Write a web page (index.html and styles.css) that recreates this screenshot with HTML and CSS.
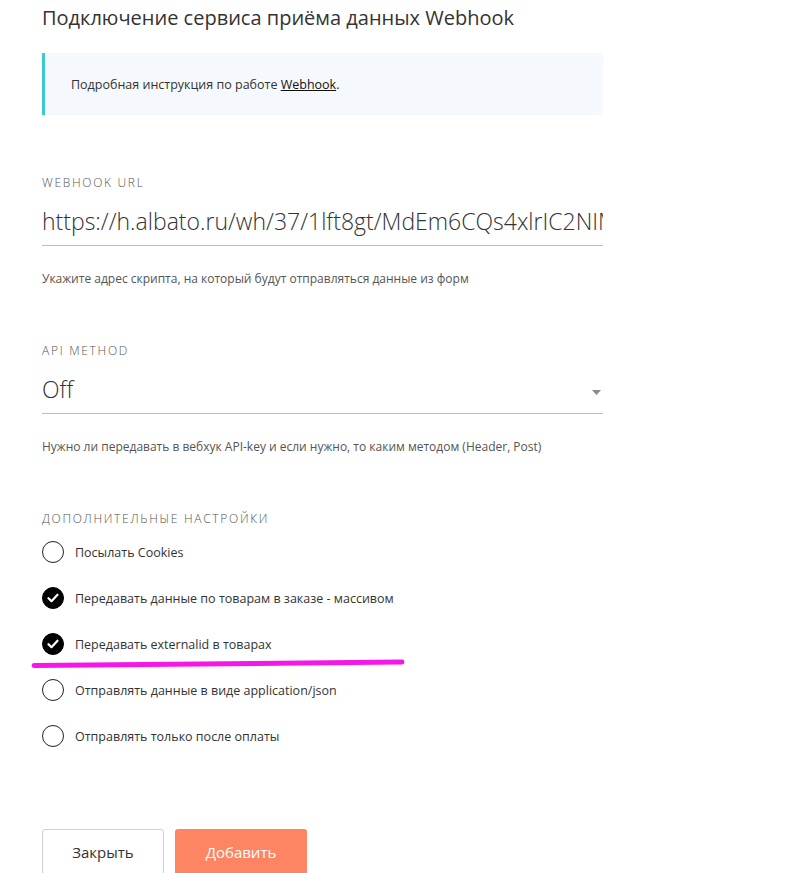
FILE: index.html
```html
<!DOCTYPE html>
<html lang="ru">
<head>
<meta charset="utf-8">
<title>Webhook</title>
<link rel="stylesheet" href="styles.css">
</head>
<body>
<div class="page">
  <h1 class="title">Подключение сервиса приёма данных Webhook</h1>
  <div class="info"><span>Подробная инструкция по работе <a href="#" class="info-link">Webhook</a>.</span></div>

  <div class="field field-first">
    <div class="label">WEBHOOK URL</div>
    <div class="input">https://h.albato.ru/wh/37/1lft8gt/MdEm6CQs4xlrIC2NIM</div>
    <div class="help">Укажите адрес скрипта, на который будут отправляться данные из форм</div>
  </div>

  <div class="field">
    <div class="label">API METHOD</div>
    <div class="input select">
      <span>Off</span>
      <svg class="caret" width="9" height="5" viewBox="0 0 9 5"><path d="M0 0h9L4.5 5z" fill="#8a8a8a"/></svg>
    </div>
    <div class="help">Нужно ли передавать в вебхук API-key и если нужно, то каким методом (Header, Post)</div>
  </div>

  <div class="field">
    <div class="label">ДОПОЛНИТЕЛЬНЫЕ НАСТРОЙКИ</div>
    <div class="checks">
      <div class="check"><span class="box"></span><span>Посылать Cookies</span></div>
      <div class="check"><span class="box on"><svg width="12" height="10" viewBox="0 0 12 10"><path d="M1.5 5.2l3 3 6-6.5" fill="none" stroke="#fff" stroke-width="2.2" stroke-linecap="round" stroke-linejoin="round"/></svg></span><span>Передавать данные по товарам в заказе - массивом</span></div>
      <div class="check"><span class="box on"><svg width="12" height="10" viewBox="0 0 12 10"><path d="M1.5 5.2l3 3 6-6.5" fill="none" stroke="#fff" stroke-width="2.2" stroke-linecap="round" stroke-linejoin="round"/></svg></span><span>Передавать externalid в товарах</span></div>
      <div class="check"><span class="box"></span><span>Отправлять данные в виде application/json</span></div>
      <div class="check"><span class="box"></span><span>Отправлять только после оплаты</span></div>
    </div>
  </div>

  <div class="actions">
    <button class="btn btn-close">Закрыть</button>
    <button class="btn btn-add">Добавить</button>
  </div>
</div>
<svg class="annotation" width="792" height="873" viewBox="0 0 792 873"><path d="M34 665.5 Q220 663 402 662" fill="none" stroke="#f516e8" stroke-width="5" stroke-linecap="round"/></svg>
</body>
</html>
```

FILE: styles.css
```css
html, body {
  margin: 0;
  padding: 0;
  background: #fff;
}
body {
  font-family: "Open Sans", "DejaVu Sans", sans-serif;
  color: #333;
  position: relative;
  height: 873px;
  overflow: hidden;
}
.page {
  width: 561px;
  padding-left: 42px;
}
.title {
  margin: 0;
  font-size: 20px;
  font-weight: 400;
  line-height: 36px;
  color: #333;
}
.info {
  margin-top: 17px;
  height: 62px;
  box-sizing: border-box;
  border-left: 3px solid #3cc8d6;
  background: #f5f9fd;
  padding-left: 26px;
  display: flex;
  align-items: center;
  font-size: 12.5px;
  color: #333;
}
.info-link {
  color: #111;
  text-decoration: underline;
}
.field {
  margin-top: 56px;
}
.field-first {
  margin-top: 60px;
}
.label {
  font-size: 12px;
  line-height: 16px;
  letter-spacing: 1.7px;
  color: #555;
  font-weight: 300;
}
.input {
  padding: 10px 0 4px;
  line-height: 40px;
  height: 40px;
  font-size: 23px;
  font-weight: 300;
  color: #333;
  border-bottom: 1px solid #bdbdbd;
  white-space: nowrap;
  overflow: hidden;
}
.select {
  display: flex;
  align-items: center;
  justify-content: space-between;
}
.select .caret {
  margin-right: 2px;
  margin-top: 6px;
}
.help {
  margin-top: 25px;
  font-size: 12px;
  line-height: 16px;
  color: #555;
}
.checks {
  margin-top: 14px;
  display: flex;
  flex-direction: column;
  gap: 24px;
}
.check {
  display: flex;
  align-items: center;
  gap: 11px;
  height: 22px;
  font-size: 12.5px;
  color: #333;
}
.box {
  width: 22px;
  height: 22px;
  box-sizing: border-box;
  border: 1.5px solid #222;
  border-radius: 50%;
  display: flex;
  align-items: center;
  justify-content: center;
  flex: none;
}
.box.on {
  background: #000;
  border-color: #000;
}
.actions {
  margin-top: 82px;
  display: flex;
  gap: 11px;
}
.btn {
  height: 46px;
  border-radius: 3px;
  font-family: "Open Sans", "DejaVu Sans", sans-serif;
  font-size: 15px;
  cursor: pointer;
}
.btn-close {
  width: 122px;
  background: #fff;
  border: 1px solid #d0d0d0;
  color: #333;
}
.btn-add {
  width: 132px;
  background: #fe8563;
  border: none;
  color: #fff;
}
.annotation {
  position: absolute;
  left: 0;
  top: 0;
  pointer-events: none;
}
```
